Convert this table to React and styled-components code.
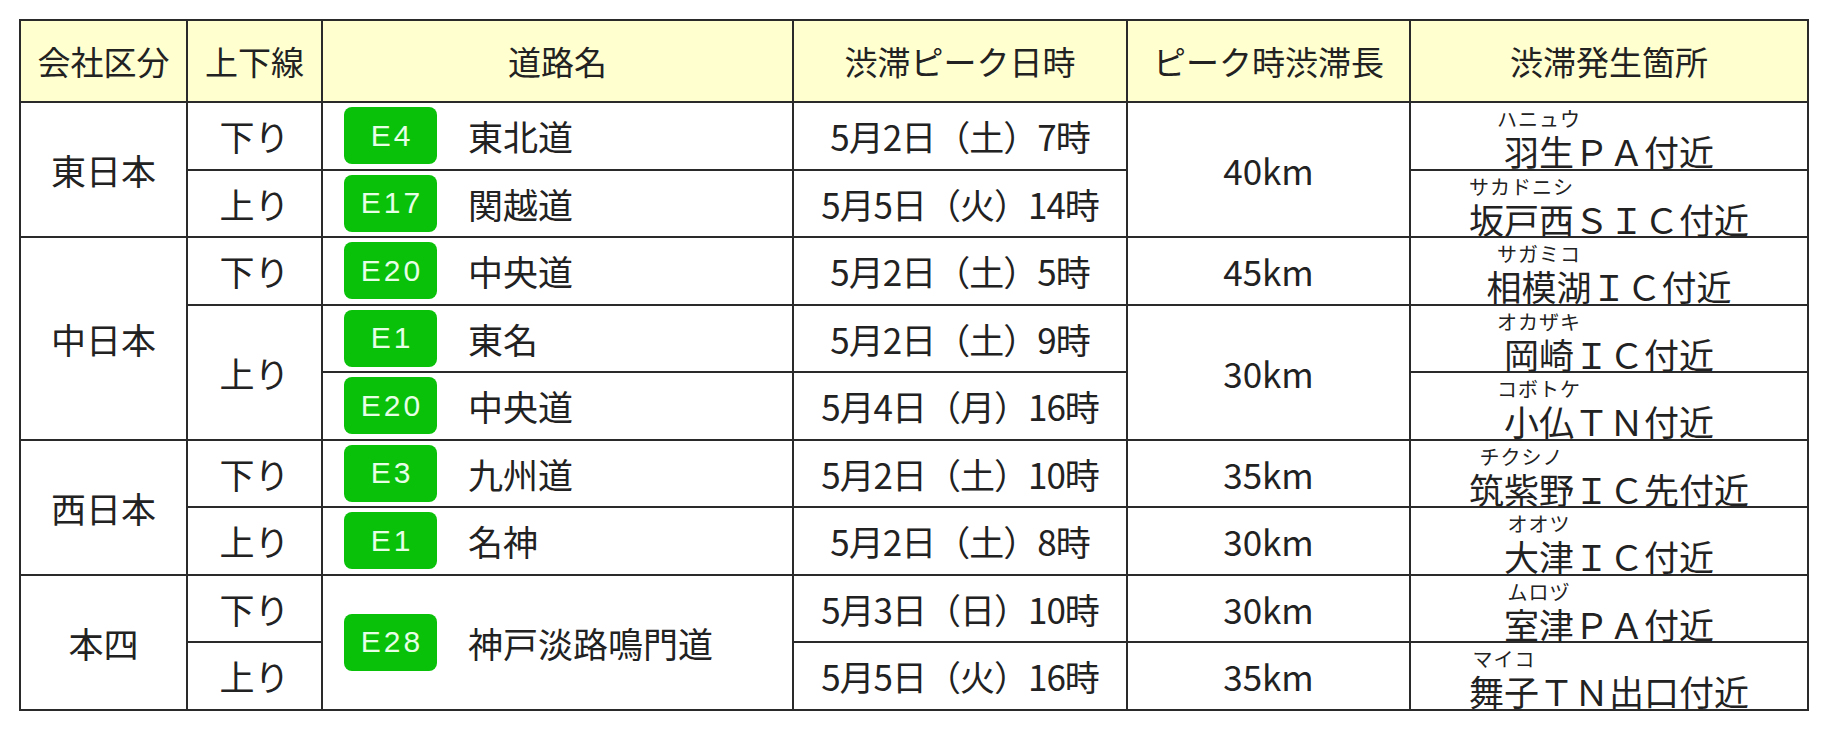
import React from "react";
import styled, { createGlobalStyle } from "styled-components";

const GlobalStyle = createGlobalStyle`
  body {
    margin: 0;
    background: #fff;
    color: #222;
    font-family: "Noto Sans CJK JP", sans-serif;
  }
`;

const Page = styled.div`
  padding: 19px 0 0 19px;
`;

const Table = styled.table`
  border-collapse: collapse;
  table-layout: fixed;
  width: 1788px;
`;

const Row = styled.tr`
  height: 67.5px;
`;

const HeadCell = styled.th`
  height: 80px;
  padding: 0;
  background: #ffffd0;
  border: 2px solid #2a2a2a;
  font-size: 33px;
  font-weight: 400;
  line-height: 1;
  text-align: center;
  vertical-align: middle;
`;

const Cell = styled.td`
  padding: 0;
  border: 2px solid #2a2a2a;
  font-size: 35px;
  line-height: 1;
  text-align: center;
  vertical-align: middle;
  letter-spacing: ${(p) => (p.$tight ? "-1px" : "0")};
`;

const RoadCell = styled(Cell)`
  text-align: left;
  padding-left: 21px;
`;

const Road = styled.div`
  display: flex;
  align-items: center;
  gap: 31px;
`;

const Badge = styled.span`
  display: inline-flex;
  align-items: center;
  justify-content: center;
  width: 93px;
  height: 57px;
  border-radius: 8px;
  background: #08c108;
  color: #e6ffe6;
  font-family: "Liberation Sans", sans-serif;
  font-size: 30px;
  letter-spacing: 3px;
  text-indent: 3px;
`;

const PlaceBox = styled.div`
  height: 65px;
  display: flex;
  align-items: flex-end;
  justify-content: center;
`;

const KanjiGroup = styled.span`
  display: inline-flex;
  flex-direction: column;
  align-items: center;
`;

/* zero-width box so the reading overhangs its kanji like ruby */
const Reading = styled.span`
  display: flex;
  justify-content: center;
  width: 0;
  margin-bottom: 4px;
  font-size: 20px;
  line-height: 1;
  letter-spacing: 1px;
  white-space: nowrap;
`;

const Place = ({ kanji, reading, rest }) => (
  <PlaceBox>
    <KanjiGroup>
      <Reading>{reading}</Reading>
      <span>{kanji}</span>
    </KanjiGroup>
    <span>{rest}</span>
  </PlaceBox>
);

const RoadName = ({ no, name }) => (
  <Road>
    <Badge>{no}</Badge>
    <span>{name}</span>
  </Road>
);

export default function App() {
  return (
    <Page>
      <GlobalStyle />
      <Table>
        <colgroup>
          <col style={{ width: 167 }} />
          <col style={{ width: 135 }} />
          <col style={{ width: 471 }} />
          <col style={{ width: 334 }} />
          <col style={{ width: 283 }} />
          <col style={{ width: 398 }} />
        </colgroup>
        <thead>
          <tr>
            <HeadCell>会社区分</HeadCell>
            <HeadCell>上下線</HeadCell>
            <HeadCell>道路名</HeadCell>
            <HeadCell>渋滞ピーク日時</HeadCell>
            <HeadCell>ピーク時渋滞長</HeadCell>
            <HeadCell>渋滞発生箇所</HeadCell>
          </tr>
        </thead>
        <tbody>
          <Row>
            <Cell rowSpan={2}>東日本</Cell>
            <Cell>下り</Cell>
            <RoadCell><RoadName no="E4" name="東北道" /></RoadCell>
            <Cell $tight>5月2日（土）7時</Cell>
            <Cell rowSpan={2}>40km</Cell>
            <Cell><Place kanji="羽生" reading="ハニュウ" rest="ＰＡ付近" /></Cell>
          </Row>
          <Row>
            <Cell>上り</Cell>
            <RoadCell><RoadName no="E17" name="関越道" /></RoadCell>
            <Cell $tight>5月5日（火）14時</Cell>
            <Cell><Place kanji="坂戸西" reading="サカドニシ" rest="ＳＩＣ付近" /></Cell>
          </Row>
          <Row>
            <Cell rowSpan={3}>中日本</Cell>
            <Cell>下り</Cell>
            <RoadCell><RoadName no="E20" name="中央道" /></RoadCell>
            <Cell $tight>5月2日（土）5時</Cell>
            <Cell>45km</Cell>
            <Cell><Place kanji="相模湖" reading="サガミコ" rest="ＩＣ付近" /></Cell>
          </Row>
          <Row>
            <Cell rowSpan={2}>上り</Cell>
            <RoadCell><RoadName no="E1" name="東名" /></RoadCell>
            <Cell $tight>5月2日（土）9時</Cell>
            <Cell rowSpan={2}>30km</Cell>
            <Cell><Place kanji="岡崎" reading="オカザキ" rest="ＩＣ付近" /></Cell>
          </Row>
          <Row>
            <RoadCell><RoadName no="E20" name="中央道" /></RoadCell>
            <Cell $tight>5月4日（月）16時</Cell>
            <Cell><Place kanji="小仏" reading="コボトケ" rest="ＴＮ付近" /></Cell>
          </Row>
          <Row>
            <Cell rowSpan={2}>西日本</Cell>
            <Cell>下り</Cell>
            <RoadCell><RoadName no="E3" name="九州道" /></RoadCell>
            <Cell $tight>5月2日（土）10時</Cell>
            <Cell>35km</Cell>
            <Cell><Place kanji="筑紫野" reading="チクシノ" rest="ＩＣ先付近" /></Cell>
          </Row>
          <Row>
            <Cell>上り</Cell>
            <RoadCell><RoadName no="E1" name="名神" /></RoadCell>
            <Cell $tight>5月2日（土）8時</Cell>
            <Cell>30km</Cell>
            <Cell><Place kanji="大津" reading="オオツ" rest="ＩＣ付近" /></Cell>
          </Row>
          <Row>
            <Cell rowSpan={2}>本四</Cell>
            <Cell>下り</Cell>
            <RoadCell rowSpan={2}><RoadName no="E28" name="神戸淡路鳴門道" /></RoadCell>
            <Cell $tight>5月3日（日）10時</Cell>
            <Cell>30km</Cell>
            <Cell><Place kanji="室津" reading="ムロヅ" rest="ＰＡ付近" /></Cell>
          </Row>
          <Row>
            <Cell>上り</Cell>
            <Cell $tight>5月5日（火）16時</Cell>
            <Cell>35km</Cell>
            <Cell><Place kanji="舞子" reading="マイコ" rest="ＴＮ出口付近" /></Cell>
          </Row>
        </tbody>
      </Table>
    </Page>
  );
}
